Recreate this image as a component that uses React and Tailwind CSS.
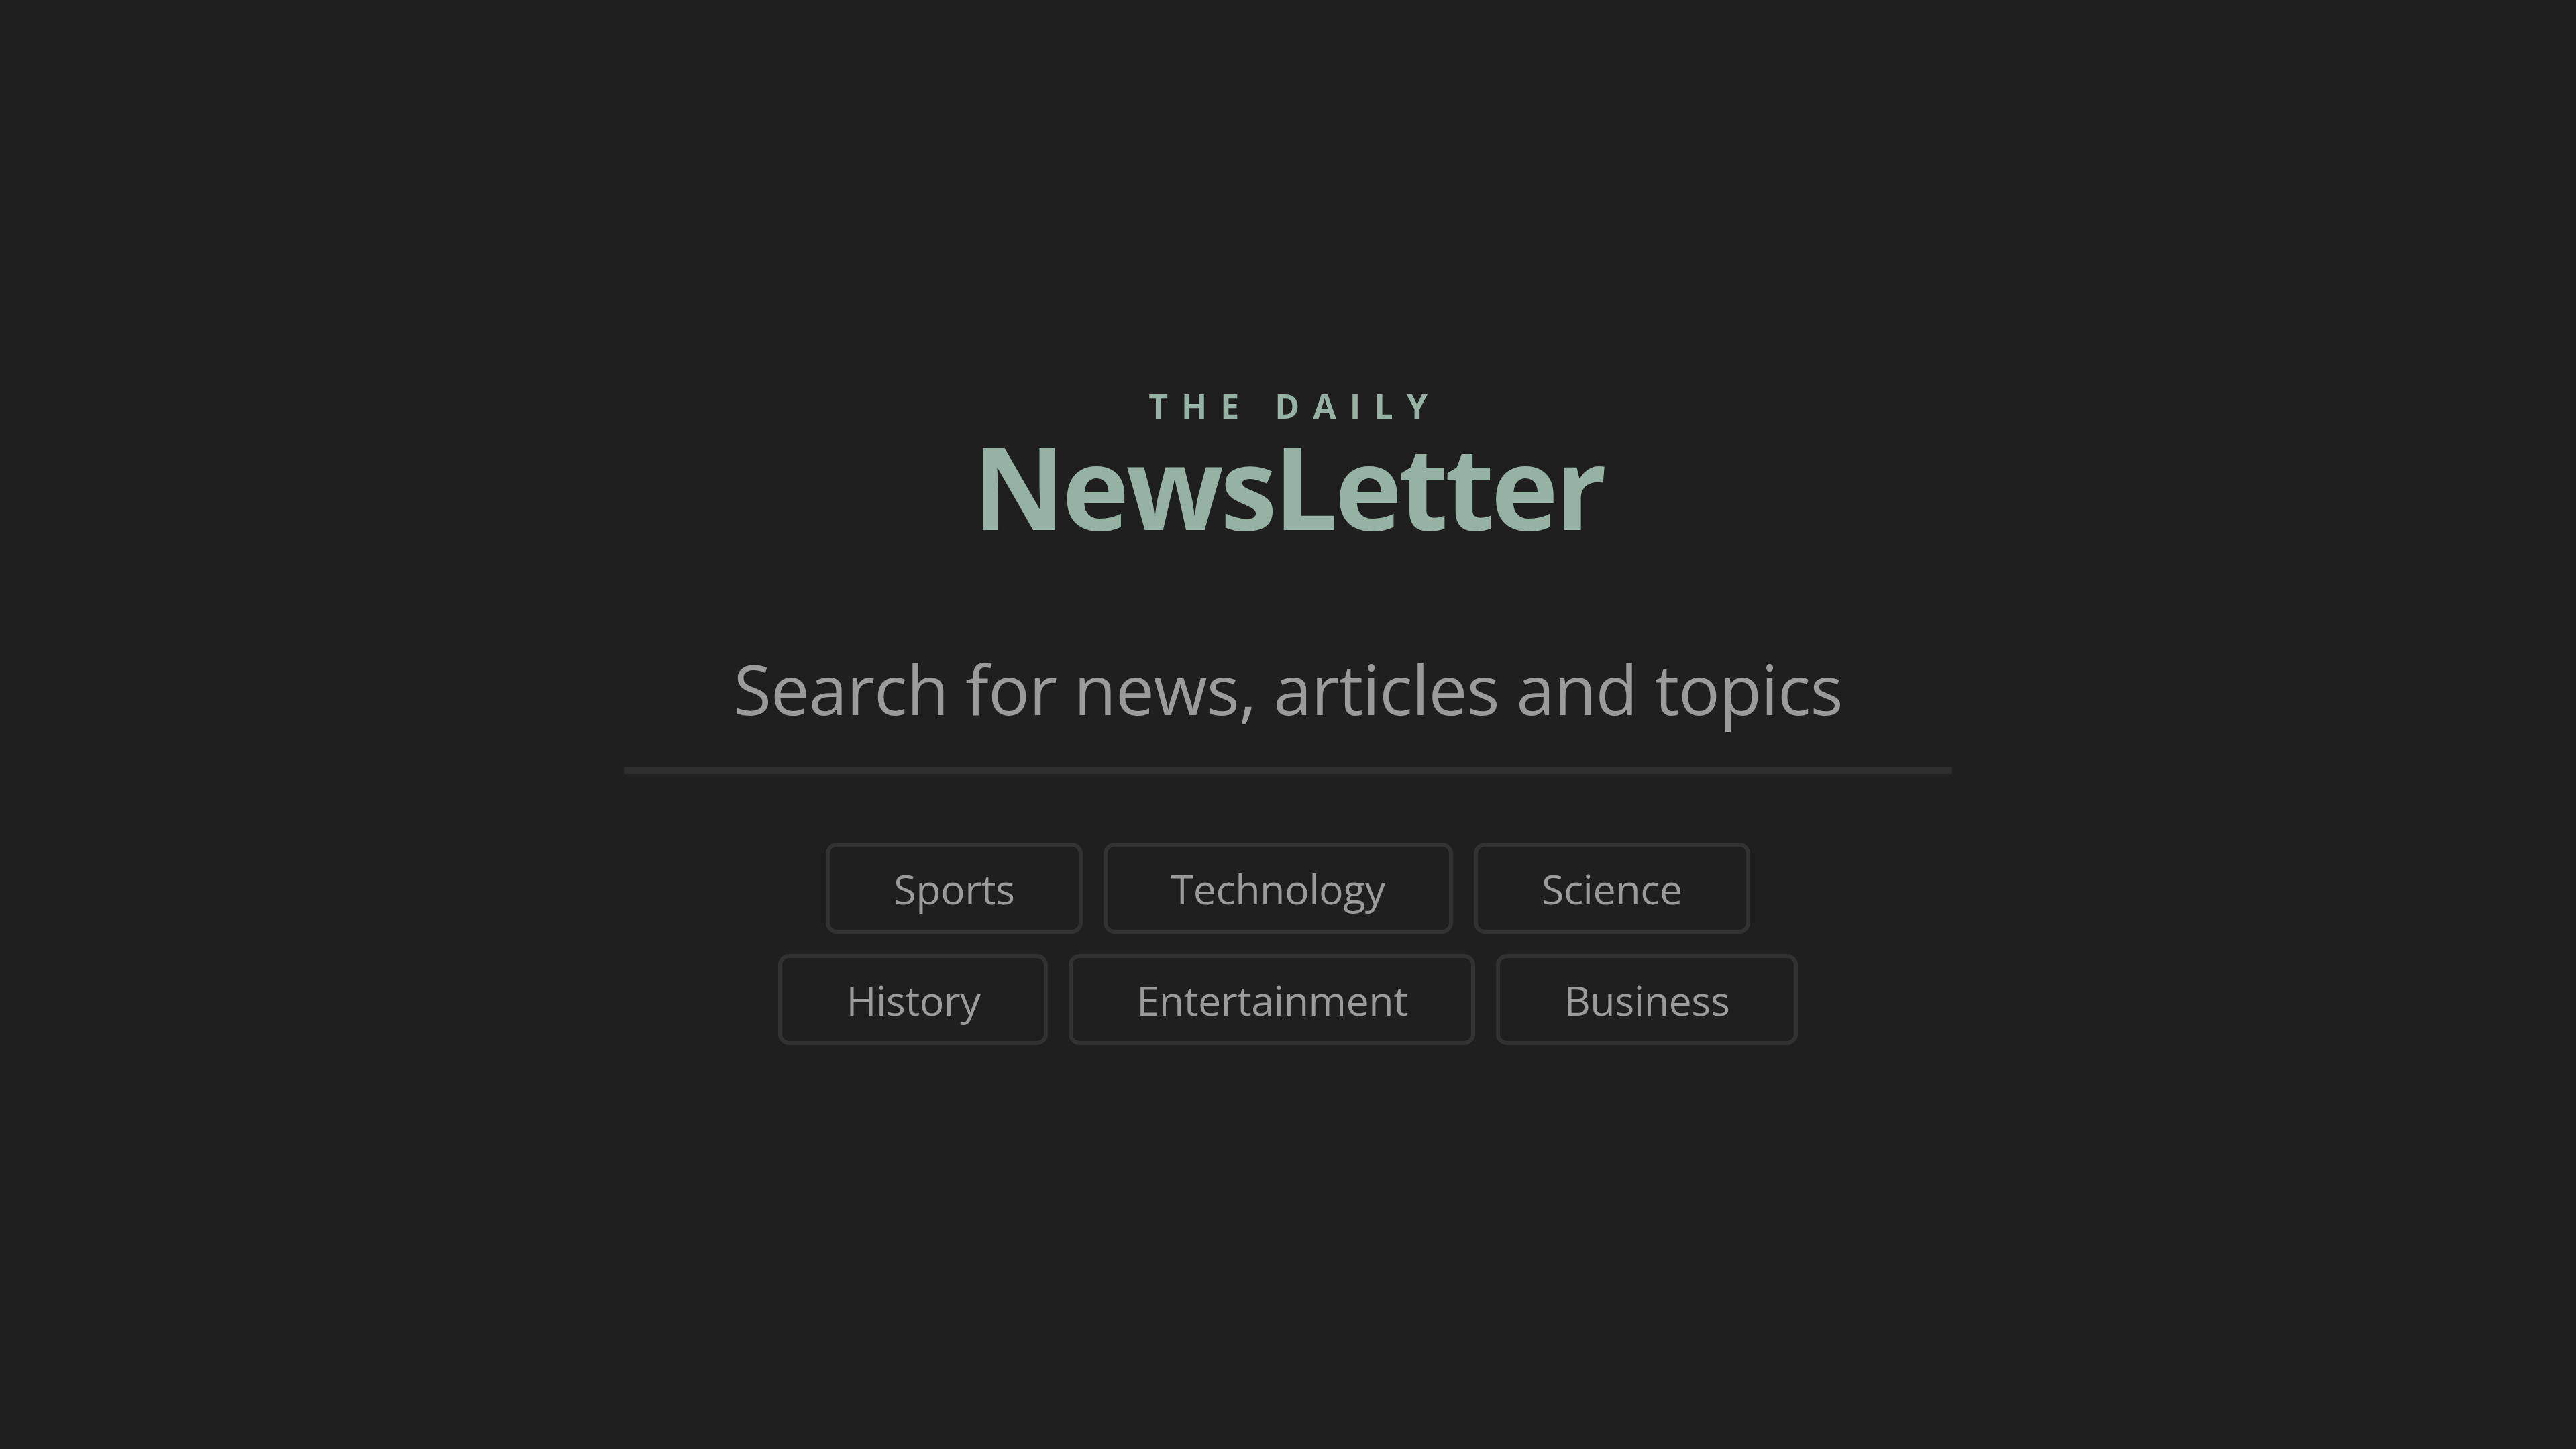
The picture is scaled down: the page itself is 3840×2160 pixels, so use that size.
export default function App() {
  const row1 = ["Sports", "Technology", "Science"];
  const row2 = ["History", "Entertainment", "Business"];
  const Chip = ({ label }) => (
    <button className="h-[136px] px-[95px] rounded-[16px] border-[6px] border-[#323232] bg-[#1f1f1f] text-[#9b9b9b] text-[61px] leading-none font-normal tracking-[-0.5px]">
      {label}
    </button>
  );
  return (
    <div
      className="w-full h-screen bg-[#1f1f1f] flex flex-col items-center pt-[580px]"
      style={{ fontFamily: "'Open Sans', 'Noto Sans', sans-serif" }}
    >
      <div className="text-[50px] leading-none font-bold tracking-[20px] text-[#95b2a5] pl-[20px]">
        THE DAILY
      </div>
      <h1 className="mt-[9px] text-[170px] leading-none font-bold tracking-[-5px] text-[#95b2a5]">
        NewsLetter
      </h1>
      <div className="mt-[166px] w-[1980px] flex flex-col items-center">
        <div className="text-[103px] leading-none text-[#9b9b9b] tracking-[-1px] pb-[66px]">
          Search for news, articles and topics
        </div>
        <div className="w-full h-[10px] bg-[#2f2f2f]" />
      </div>
      <div className="mt-[102px] flex flex-col items-center gap-[30px]">
        <div className="flex gap-[31px]">
          {row1.map((l) => (
            <Chip key={l} label={l} />
          ))}
        </div>
        <div className="flex gap-[31px]">
          {row2.map((l) => (
            <Chip key={l} label={l} />
          ))}
        </div>
      </div>
    </div>
  );
}
